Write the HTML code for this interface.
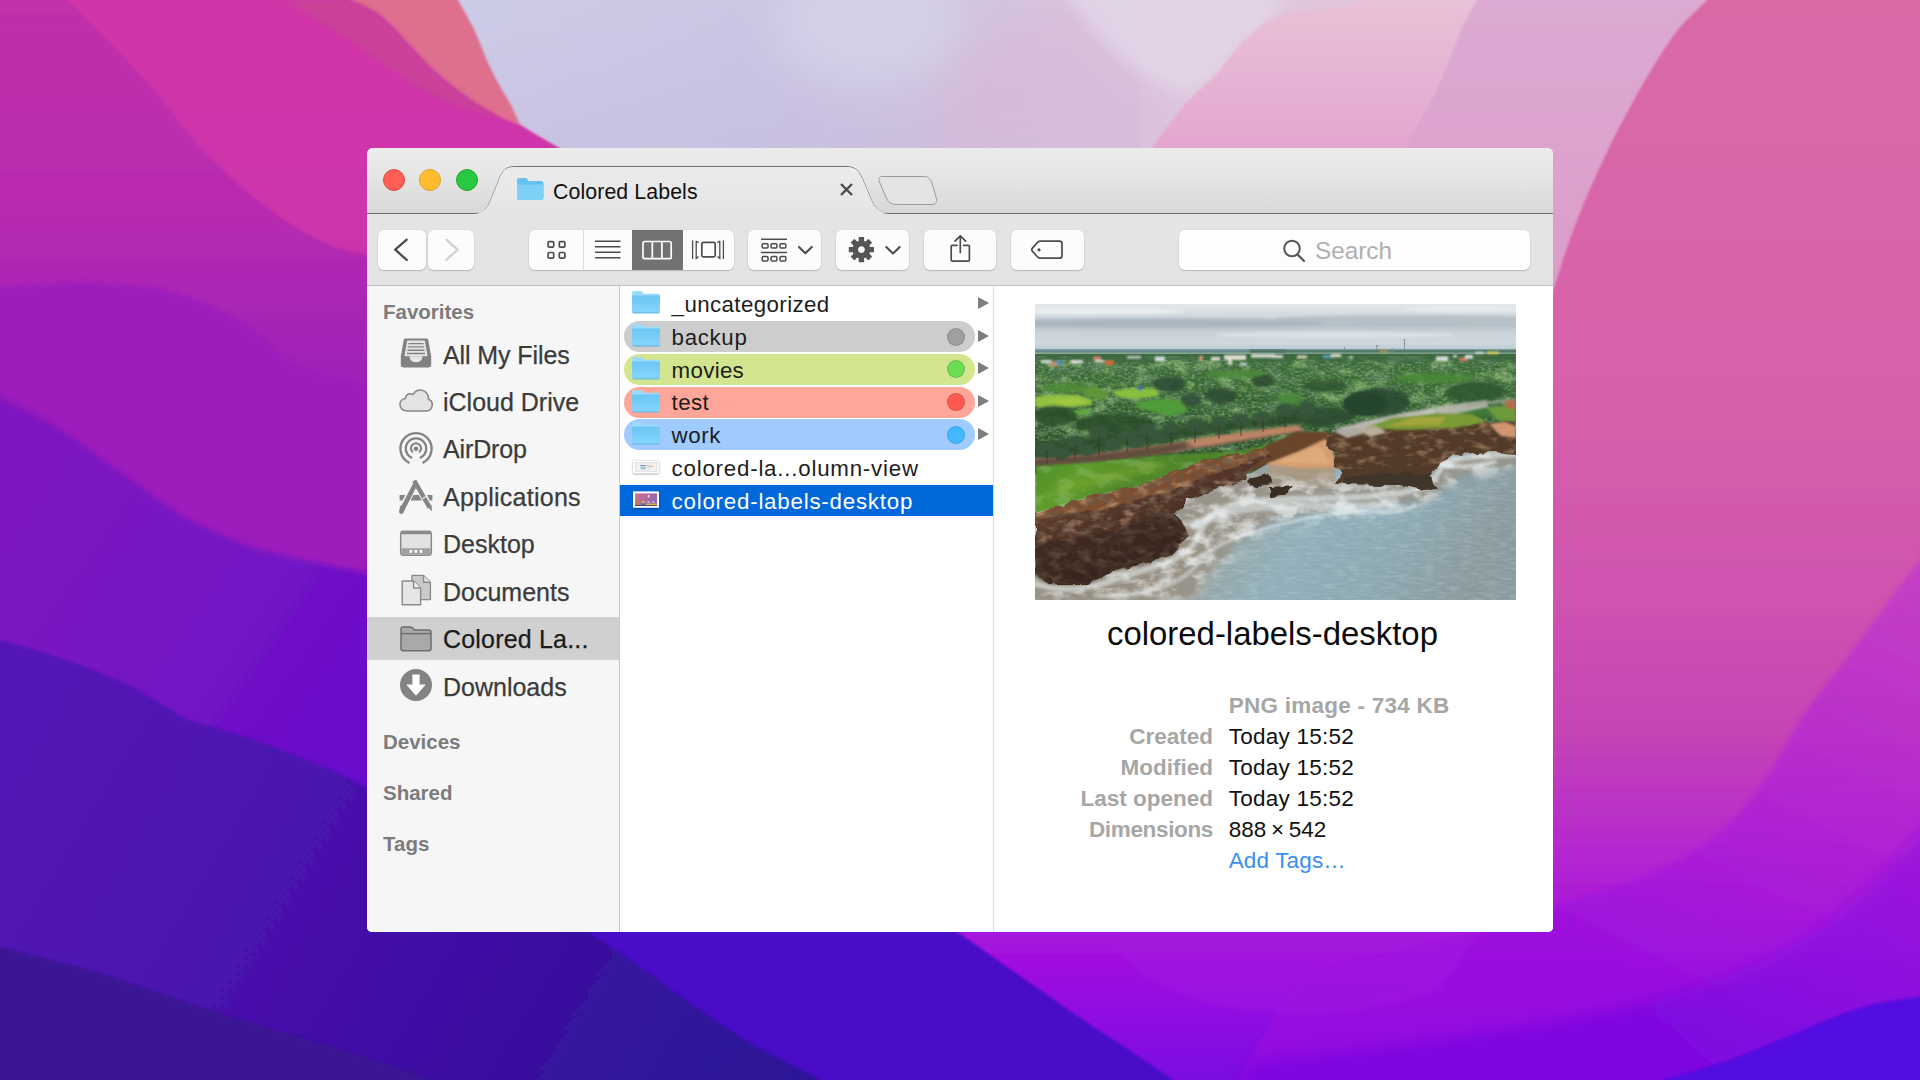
<!DOCTYPE html>
<html lang="en">
<head>
<meta charset="utf-8">
<title>Colored Labels</title>
<style>
html,body{margin:0;padding:0;width:1920px;height:1080px;overflow:hidden;background:#7a14c4;}
body{font-family:"Liberation Sans",sans-serif;position:relative;-webkit-font-smoothing:antialiased;}
#wall{position:absolute;left:0;top:0;width:1920px;height:1080px;display:block;}
#win{position:absolute;left:367px;top:148px;width:1186px;height:784px;border-radius:6px 6px 5px 5px;overflow:hidden;background:#fff;}
#win *{box-sizing:border-box;}
.abs{position:absolute;}
#titlebar{position:absolute;left:0;top:0;width:1186px;height:65px;background:linear-gradient(#ececec 0%,#e6e6e6 40%,#d8d8d8 100%);}
#tabsvg{position:absolute;left:0;top:-1px;}
#toolbar{position:absolute;left:0;top:66px;width:1186px;height:71px;background:#e4e4e4;}
#tbline{position:absolute;left:0;top:137px;width:1186px;height:1px;background:#c2c2c2;}
.tl{position:absolute;top:21px;width:22px;height:22px;border-radius:50%;}
.btn{position:absolute;top:82px;height:40px;background:#fcfcfc;border-radius:6px;box-shadow:0 1px 1.5px rgba(0,0,0,.18),0 0 0 .5px rgba(0,0,0,.04);}
.btn svg{position:absolute;left:0;top:0;}
#tabtitle{position:absolute;left:186px;top:31.6px;font-size:21.3px;line-height:24px;color:#111;white-space:nowrap;letter-spacing:.1px;}
#search{position:absolute;left:812px;top:82px;width:351px;height:40px;background:#fdfdfd;border-radius:6px;box-shadow:0 1px 1.5px rgba(0,0,0,.18),0 0 0 .5px rgba(0,0,0,.04);}
#search span{position:absolute;left:136px;top:6.5px;font-size:24.3px;line-height:28px;color:#b0b0b0;}
#sidebar{position:absolute;left:0;top:138px;width:252px;height:646px;background:#f6f6f6;}
#sbdiv{position:absolute;left:252px;top:138px;width:1px;height:646px;background:#c8c8c8;}
.sh{position:absolute;left:16px;font-size:20.5px;line-height:24px;font-weight:bold;color:#7c7c7c;white-space:nowrap;}
.si{position:absolute;left:0;width:252px;height:43px;}
.si span{position:absolute;left:76px;top:7px;-webkit-text-stroke:.25px #3b3b3b;font-size:25px;line-height:30px;color:#3b3b3b;white-space:nowrap;}
.si svg{position:absolute;left:30.7px;top:2.7px;}
.si.sel{background:#d0d0d0;}
.si.sel span{color:#1b1b1b;-webkit-text-stroke:.25px #1b1b1b;}
#col{position:absolute;left:253px;top:138px;width:373px;height:646px;background:#fff;}
#coldiv{position:absolute;left:626px;top:138px;width:1px;height:646px;background:#dcdcdc;}
.row{position:absolute;left:0;width:373px;height:31px;}
.row .nm{position:absolute;left:51.6px;top:2.9px;font-size:22.3px;line-height:27px;color:#1d1d1d;white-space:nowrap;letter-spacing:.4px;}
.row .pill{position:absolute;left:4px;top:0;width:351px;height:31px;border-radius:15.5px;}
.row .dot{position:absolute;left:327px;top:6.8px;width:18px;height:18px;border-radius:50%;border:1px solid rgba(0,0,0,.13);}
.row .tri{position:absolute;left:358px;top:8.7px;width:0;height:0;border-left:11px solid #7d7d7d;border-top:6.3px solid transparent;border-bottom:6.3px solid transparent;}
.row svg.fi{position:absolute;left:11px;top:2px;}
.row.sel{background:#0068da;}
.row.sel .nm{color:#fff;}
#prev{position:absolute;left:627px;top:138px;width:559px;height:646px;background:#fff;}
#photo{position:absolute;left:668px;top:156px;width:481px;height:296px;display:block;}
#ptitle{position:absolute;left:627px;width:559px;top:465.5px;text-align:center;font-size:32.9px;line-height:40px;color:#0b0b0b;white-space:nowrap;text-indent:-2px;}
.il{position:absolute;right:340px;font-size:22.5px;line-height:26px;color:#a6a6a6;white-space:nowrap;font-weight:bold;}
.iv{position:absolute;left:861.7px;font-size:22.5px;line-height:26px;color:#111;white-space:nowrap;}

</style>
</head>
<body>
<svg id="wall" width="1920" height="1080" viewBox="0 0 1920 1080">
<defs>
<linearGradient id="gsky" x1="440" y1="0" x2="1500" y2="0" gradientUnits="userSpaceOnUse">
<stop offset="0" stop-color="#cdcce7"/><stop offset="0.3" stop-color="#cbc6e3"/><stop offset="0.52" stop-color="#d3c4de"/><stop offset="0.66" stop-color="#dcc8de"/><stop offset="1" stop-color="#e6c4da"/>
</linearGradient>
<linearGradient id="ghill" x1="0" y1="0" x2="0" y2="150" gradientUnits="userSpaceOnUse">
<stop offset="0" stop-color="#e8c2d8"/><stop offset="1" stop-color="#e4a6cf"/>
</linearGradient>
<linearGradient id="gband" x1="0" y1="0" x2="0" y2="300" gradientUnits="userSpaceOnUse">
<stop offset="0" stop-color="#dcaad2"/><stop offset="1" stop-color="#dc9cc8"/>
</linearGradient>
<linearGradient id="ghot" x1="0" y1="0" x2="0" y2="1080" gradientUnits="userSpaceOnUse">
<stop offset="0" stop-color="#d96aa6"/><stop offset="0.35" stop-color="#d862aa"/><stop offset="0.55" stop-color="#d054b0"/><stop offset="0.68" stop-color="#c644b6"/><stop offset="0.8" stop-color="#b424d2"/><stop offset="0.88" stop-color="#a412de"/><stop offset="0.95" stop-color="#8c0ae2"/><stop offset="1" stop-color="#7c08e2"/>
</linearGradient>
<linearGradient id="gviol" x1="1920" y1="560" x2="1700" y2="1000" gradientUnits="userSpaceOnUse">
<stop offset="0" stop-color="#c238cc"/><stop offset="0.5" stop-color="#b222d6"/><stop offset="1" stop-color="#9a10de"/>
</linearGradient>
<linearGradient id="gviol2" x1="1920" y1="830" x2="1700" y2="1080" gradientUnits="userSpaceOnUse">
<stop offset="0" stop-color="#8c0ee0"/><stop offset="1" stop-color="#6c06e2"/>
</linearGradient>
<linearGradient id="gmag" x1="0" y1="0" x2="0" y2="600" gradientUnits="userSpaceOnUse">
<stop offset="0" stop-color="#d236a8"/><stop offset="0.4" stop-color="#cc34ac"/><stop offset="0.62" stop-color="#b82eb0"/><stop offset="1" stop-color="#a424b8"/>
</linearGradient>
<linearGradient id="gmag2" x1="0" y1="0" x2="0" y2="600" gradientUnits="userSpaceOnUse">
<stop offset="0" stop-color="#c030aa"/><stop offset="0.35" stop-color="#b82cb0"/><stop offset="0.6" stop-color="#a222b8"/><stop offset="1" stop-color="#961cbe"/>
</linearGradient>
<linearGradient id="gpur1" x1="-40" y1="380" x2="520" y2="760" gradientUnits="userSpaceOnUse">
<stop offset="0" stop-color="#8219be"/><stop offset="0.45" stop-color="#7514c4"/><stop offset="0.8" stop-color="#690ecb"/><stop offset="1" stop-color="#640ccd"/>
</linearGradient>
<linearGradient id="gind" x1="0" y1="620" x2="800" y2="1100" gradientUnits="userSpaceOnUse">
<stop offset="0" stop-color="#5615b8"/><stop offset="0.35" stop-color="#4c12b0"/><stop offset="0.65" stop-color="#3c11a2"/><stop offset="0.9" stop-color="#2f1398"/><stop offset="1" stop-color="#2c1396"/>
</linearGradient>
<filter id="b3" filterUnits="userSpaceOnUse" x="-60" y="-60" width="2040" height="1200"><feGaussianBlur stdDeviation="2.5"/></filter>
<filter id="b1" filterUnits="userSpaceOnUse" x="-60" y="-60" width="2040" height="1200"><feGaussianBlur stdDeviation="1"/></filter>
<filter id="b8" filterUnits="userSpaceOnUse" x="-60" y="-60" width="2040" height="1200"><feGaussianBlur stdDeviation="8"/></filter>
<linearGradient id="gskyv" x1="0" y1="0" x2="0" y2="160" gradientUnits="userSpaceOnUse"><stop offset="0" stop-color="#c0b4dc" stop-opacity="0"/><stop offset="1" stop-color="#c0b0da" stop-opacity=".3"/></linearGradient>
<filter id="b20" filterUnits="userSpaceOnUse" x="-60" y="-60" width="2040" height="1200"><feGaussianBlur stdDeviation="22"/></filter>
</defs>
<!-- sky -->
<rect width="1920" height="1080" fill="url(#gsky)"/>
<rect x="440" y="0" width="700" height="160" fill="url(#gskyv)"/>
<ellipse cx="870" cy="25" rx="95" ry="60" fill="#d8dcee" opacity=".55" filter="url(#b20)"/>
<path d="M925 160 L955 50 L1010 20 L1090 -10 L1200 160 Z" fill="#dab8d6" opacity=".5" filter="url(#b20)"/>
<!-- light patch -->
<path d="M1040 -40 C1090 30 1130 80 1190 95 C1230 60 1270 25 1310 -40 Z" fill="#e4d8ea" opacity="0.75" filter="url(#b8)"/>
<!-- pink hill -->
<path d="M1120 200 C1140 165 1160 135 1180 110 C1200 88 1212 80 1220 70 C1232 55 1240 42 1250 35 C1262 24 1275 15 1290 12 C1315 8 1340 8 1355 5 L1375 -40 L1960 -40 L1960 400 L1100 400 Z" fill="url(#ghill)" filter="url(#b1)"/>
<!-- pink band -->
<path d="M1497 -40 L1477 0 C1470 12 1465 22 1460 33 C1452 52 1448 65 1440 83 C1430 105 1420 120 1413 133 C1405 150 1395 175 1380 210 L1380 400 L1960 400 L1960 -40 Z" fill="url(#gband)" filter="url(#b1)"/>
<!-- hot pink big shape (right) -->
<path d="M1740 -40 L1707 0 C1698 9 1689 17 1680 27 C1670 40 1661 53 1653 67 C1644 82 1635 97 1627 113 C1617 131 1608 149 1600 167 C1593 182 1586 197 1580 213 C1574 228 1568 244 1563 260 C1555 285 1540 330 1520 400 L1300 900 L900 900 L900 1140 L1980 1140 L1980 -40 Z" fill="url(#ghot)" filter="url(#b1)"/>
<!-- violet overlays right/bottom -->
<path d="M1980 490 L1920 560 C1905 578 1892 595 1880 613 C1866 631 1853 649 1840 667 C1826 685 1812 702 1800 720 C1790 736 1782 752 1773 767 C1763 783 1752 799 1740 813 C1722 831 1702 847 1680 860 C1659 871 1636 880 1613 887 C1590 895 1570 901 1553 907 C1480 932 1400 955 1300 975 L1200 1140 L1980 1140 Z" fill="url(#gviol)" opacity="0.7" filter="url(#b3)"/>
<path d="M1980 760 L1920 833 C1897 860 1872 884 1847 907 C1826 924 1803 940 1780 953 C1753 966 1725 978 1697 987 C1669 996 1641 1004 1613 1010 C1500 1032 1380 1050 1250 1062 L1200 1140 L1980 1140 Z" fill="url(#gviol2)" opacity="0.55" filter="url(#b8)"/>
<path d="M1980 990 L1920 997 C1900 999 1881 1002 1863 1007 C1840 1014 1818 1023 1797 1033 C1774 1042 1752 1051 1730 1060 C1707 1067 1685 1074 1663 1080 L1500 1140 L1980 1140 Z" fill="#5208e0" filter="url(#b1)"/>
<path d="M1090 900 L1107 932 C1116 947 1127 961 1140 973 C1160 986 1183 996 1207 1003 C1231 1008 1256 1011 1280 1013 C1330 1016 1380 1010 1440 990 L1500 900 Z" fill="#a41ee0" opacity="0.4" filter="url(#b3)"/>
<!-- salmon -->
<path d="M310 -40 L440 -40 L458 0 C463 9 468 18 473 27 C479 40 484 54 490 67 C496 80 503 92 510 103 C514 111 517 118 520 125 C532 133 545 140 557 147 L640 200 L640 400 L300 400 Z" fill="#de6f8e" filter="url(#b1)"/>
<!-- main magenta band -->
<path d="M-40 -40 L300 -40 L350 0 C360 4 369 8 377 13 C388 22 398 32 407 43 C416 52 424 61 433 70 C444 80 455 89 467 97 C478 105 489 111 500 117 C507 120 514 123 520 125 C532 133 545 140 557 147 L700 230 L700 700 L-40 700 Z" fill="url(#gmag)" filter="url(#b1)"/>
<path d="M283 0 L350 0 C360 4 369 8 377 13 C388 22 398 32 407 43 C416 52 424 61 433 70 C444 80 455 89 467 97 C478 105 489 111 500 117 C470 112 440 100 410 82 C380 62 340 30 283 0 Z" fill="#c84694" opacity=".75" filter="url(#b3)"/>
<!-- darker magenta lower-left -->
<path d="M-40 -40 L30 -40 L67 0 C82 14 96 28 110 43 C127 61 144 78 160 97 C169 109 178 121 187 133 C195 142 204 151 213 160 C226 173 239 185 253 197 C268 209 284 220 300 230 C311 236 322 242 333 247 C344 250 356 253 367 255 L700 300 L700 700 L-40 700 Z" fill="url(#gmag2)" filter="url(#b1)"/>
<!-- more purple blob -->
<path d="M-40 290 L0 287 C35 284 68 282 100 283 C123 284 146 286 167 290 C190 297 212 306 233 317 C252 329 270 344 287 360 C300 367 316 372 333 377 L367 383 L700 420 L700 700 L-40 700 Z" fill="#9c1ebc" filter="url(#b3)"/>
<!-- purple -->
<path d="M-40 378 L0 397 C17 405 34 414 50 423 C73 438 95 454 117 470 C139 486 161 502 183 517 C205 528 227 538 250 547 C272 553 294 559 317 563 C334 567 350 570 367 573 L700 620 L700 1140 L-40 1140 Z" fill="url(#gpur1)" filter="url(#b3)"/>
<path d="M560 900 L912 900 L957 932 C974 943 990 955 1007 967 C1029 982 1051 998 1073 1013 C1095 1028 1118 1043 1140 1057 L1173 1080 L1260 1140 L560 1140 Z" fill="#4a0cc8" filter="url(#b1)"/>
<!-- indigo -->
<path d="M-40 630 L0 640 C23 646 45 653 67 660 C89 668 111 677 133 687 C151 698 169 709 187 720 C202 724 218 728 233 733 C256 740 278 748 300 757 C323 766 345 776 367 787 L590 900 L590 933 C607 944 624 955 640 967 C657 979 674 991 690 1003 C707 1015 724 1026 740 1037 C762 1050 785 1062 807 1073 L820 1080 L930 1140 L-40 1140 Z" fill="url(#gind)" filter="url(#b1)"/>
<!-- dark indigo bottom -->
<path d="M-40 938 L0 947 C34 955 67 964 100 973 C134 984 167 995 200 1007 C234 1017 267 1027 300 1037 C328 1045 356 1054 383 1063 L433 1080 L600 1140 L-40 1140 Z" fill="#3a1294" filter="url(#b1)"/>
</svg>

<div id="win">
<div id="titlebar"></div>
<svg id="tabsvg" width="1186" height="67" viewBox="0 0 1186 67">
<defs><linearGradient id="tabg" x1="0" y1="19" x2="0" y2="66" gradientUnits="userSpaceOnUse"><stop offset="0" stop-color="#ebebeb"/><stop offset="1" stop-color="#e5e5e5"/></linearGradient></defs>
<path d="M0 66 L106 66 C118 66 121 60 125 50 L133 30 C137 21 141 19.5 150 19.5 L478 19.5 C487 19.5 491 22 495 31 L503 50 C507 60 511 66 523 66 L1186 66 L1186 67 L0 67 Z" fill="url(#tabg)"/>
<path d="M0 66.5 L106 66.5 C118 66.5 121 60 125 50 L133 30 C137 21 141 19.5 150 19.5 L478 19.5 C487 19.5 491 22 495 31 L503 50 C507 60 511 66.5 523 66.5 L1186 66.5" fill="none" stroke="#6e6e6e" stroke-width="1"/>
<path d="M150 20 L478 20 C487 20 491 22 495 31 L503 50 C507 60 511 66 523 66 L106 66 C118 66 121 60 125 50 L133 30 C137 21 141 20 150 20 Z" fill="url(#tabg)"/>
<path d="M516 29.5 L556 29.5 C561 29.5 563 31 565 36 L569 50 C570.5 55 569 57.5 564 57.5 L530 57.5 C524 57.5 521 55.5 519 50 L512.5 35 C511 31 512 29.5 516 29.5 Z" fill="#e4e4e4" stroke="#9a9a9a" stroke-width="1"/>
<path d="M474 37 L485 48 M485 37 L474 48" stroke="#4a4a4a" stroke-width="2.4" fill="none"/>
<g transform="translate(149,30)">
<path d="M1 3.5 C1 2 2 1 3.5 1 L9.5 1 C10.5 1 11 1.5 11.5 2.5 L12.5 4 L25 4 C26.5 4 27.5 5 27.5 6.5 L27.5 20.5 C27.5 22 26.5 23 25 23 L3.5 23 C2 23 1 22 1 20.5 Z" fill="#67c1f0"/>
<path d="M1 7.5 L27.5 7.5 L27.5 20.5 C27.5 22 26.5 23 25 23 L3.5 23 C2 23 1 22 1 20.5 Z" fill="#7fd0f7"/>
</g>
</svg>
<div class="tl" style="left:16px;background:#fe5f57;border:.5px solid #e2463f"></div>
<div class="tl" style="left:52px;background:#febc2e;border:.5px solid #e0a028"></div>
<div class="tl" style="left:89px;background:#28c840;border:.5px solid #1dab2f"></div>
<div id="tabtitle">Colored Labels</div>
<div id="toolbar"></div>
<div id="tbline"></div>
<div class="btn" style="left:10.5px;width:48px"><svg width="48" height="40"><path d="M28.7 9.7 L17.2 19.7 L28.7 29.9" fill="none" stroke="#4c4c4c" stroke-width="2.3" stroke-linecap="round" stroke-linejoin="round"/></svg></div>
<div class="btn" style="left:60.7px;width:46px"><svg width="46" height="40"><path d="M18.3 9.7 L29.6 19.7 L18.3 29.9" fill="none" stroke="#d2d2d2" stroke-width="2.3" stroke-linecap="round" stroke-linejoin="round"/></svg></div>
<div class="btn" style="left:162px;width:205px;overflow:hidden"><svg width="205" height="40">
<rect x="103" y="0" width="51" height="40" fill="#727272"/>
<rect x="54" y="0" width="1" height="40" fill="#dedede"/>
<g fill="none" stroke="#4c4c4c" stroke-width="1.7">
<rect x="19.1" y="11.6" width="5.6" height="5.6" rx="1.2"/><rect x="30.3" y="11.6" width="5.6" height="5.6" rx="1.2"/><rect x="19.1" y="22.5" width="5.6" height="5.6" rx="1.2"/><rect x="30.3" y="22.5" width="5.6" height="5.6" rx="1.2"/>
<path d="M66 11.3 H91.5 M66 16.7 H91.5 M66 22.3 H91.5 M66 27.8 H91.5" stroke-width="1.5"/>
</g>
<g fill="none" stroke="#fff" stroke-width="1.7"><rect x="114" y="11.5" width="28.2" height="17.2" rx="1.8"/><path d="M123.3 11.5 V28.7 M132.9 11.5 V28.7"/></g>
<g fill="none" stroke="#4c4c4c" stroke-width="1.7"><rect x="172.8" y="12.3" width="13.4" height="14.6" rx="1.6"/><path d="M163.6 10.5 V28.9 M194.4 10.5 V28.9" stroke-width="1.3"/><path d="M167.2 11 V28.4 L169.6 26.6 M167.2 11 L169.6 12.8 M190.8 11 V28.4 L188.4 26.6 M190.8 11 L188.4 12.8" stroke-width="1.3"/></g>
</svg></div>
<div class="btn" style="left:381px;width:73px"><svg width="73" height="40"><g fill="none" stroke="#4c4c4c" stroke-width="1.5"><path d="M13 9.2 H39 M13 22.6 H39"/><rect x="14.2" y="13.7" width="5.8" height="4.4" rx="1"/><rect x="23.1" y="13.7" width="5.8" height="4.4" rx="1"/><rect x="32" y="13.7" width="5.8" height="4.4" rx="1"/><rect x="14.2" y="26.6" width="5.8" height="4.4" rx="1"/><rect x="23.1" y="26.6" width="5.8" height="4.4" rx="1"/><rect x="32" y="26.6" width="5.8" height="4.4" rx="1"/></g><path d="M51 16.9 L57.4 23.3 L63.8 16.9" fill="none" stroke="#4c4c4c" stroke-width="2.1" stroke-linecap="round" stroke-linejoin="round"/></svg></div>
<div class="btn" style="left:469px;width:72.5px"><svg width="73" height="40"><g transform="translate(25.4,19.6)" fill="#555"><rect x="-2.7" y="-12.6" width="5.4" height="6" rx="0.6" transform="rotate(0)"/><rect x="-2.7" y="-12.6" width="5.4" height="6" rx="0.6" transform="rotate(45)"/><rect x="-2.7" y="-12.6" width="5.4" height="6" rx="0.6" transform="rotate(90)"/><rect x="-2.7" y="-12.6" width="5.4" height="6" rx="0.6" transform="rotate(135)"/><rect x="-2.7" y="-12.6" width="5.4" height="6" rx="0.6" transform="rotate(180)"/><rect x="-2.7" y="-12.6" width="5.4" height="6" rx="0.6" transform="rotate(225)"/><rect x="-2.7" y="-12.6" width="5.4" height="6" rx="0.6" transform="rotate(270)"/><rect x="-2.7" y="-12.6" width="5.4" height="6" rx="0.6" transform="rotate(315)"/><circle r="6.2" fill="none" stroke="#555" stroke-width="5.6"/></g><path d="M50.3 17 L57 23.4 L63.7 17" fill="none" stroke="#4c4c4c" stroke-width="2.1" stroke-linecap="round" stroke-linejoin="round"/></svg></div>
<div class="btn" style="left:556.8px;width:72.5px"><svg width="73" height="40"><g fill="none" stroke="#4c4c4c" stroke-width="1.7" stroke-linejoin="round" stroke-linecap="round"><path d="M33 15.3 H28.4 C27.6 15.3 27.2 15.7 27.2 16.5 V30 C27.2 30.8 27.6 31.2 28.4 31.2 H44.2 C45 31.2 45.4 30.8 45.4 30 V16.5 C45.4 15.7 45 15.3 44.2 15.3 H39.6"/><path d="M36.3 6 V22.5 M31 11.2 L36.3 5.8 L41.6 11.2"/></g></svg></div>
<div class="btn" style="left:644.3px;width:72.5px"><svg width="73" height="40"><path d="M29.3 11.2 H48.5 C50 11.2 51 12.2 51 13.7 V25.7 C51 27.2 50 28.2 48.5 28.2 H29.3 C28.3 28.2 27.6 27.9 26.8 27.2 L21.6 21.5 C20.6 20.4 20.6 19 21.6 17.9 L26.8 12.2 C27.6 11.5 28.3 11.2 29.3 11.2 Z" fill="none" stroke="#4c4c4c" stroke-width="1.7"/><circle cx="28" cy="19.8" r="1.6" fill="#4c4c4c"/></svg></div>

<div id="search"><svg width="351" height="40" style="position:absolute;left:0;top:0"><circle cx="113" cy="18.5" r="7.8" fill="none" stroke="#555" stroke-width="2"/><path d="M118.5 24.5 L125 31" stroke="#555" stroke-width="2.2" stroke-linecap="round"/></svg><span>Search</span></div>
<div id="sidebar">
<div class="sh" style="top:13.7px">Favorites</div>
<div class="si" style="top:46.5px"><svg width="36" height="36" viewBox="0 0 36 36"><path d="M7.6 3.4 H28.4 C29.5 3.4 30.1 4 30.3 5 L33.2 21.3 V29.8 C33.2 31.4 32.2 32.4 30.6 32.4 H5.4 C3.8 32.4 2.8 31.4 2.8 29.8 V21.3 L5.7 5 C5.9 4 6.5 3.4 7.6 3.4 Z" fill="#818181"/><path d="M9.2 5.6 H26.8 L29.6 21.6 H6.4 Z" fill="#e6e6e6"/><path d="M10.4 8.6 H25.6 M9.9 11.9 H26.1 M9.4 15.2 H26.6 M8.9 18.5 H27.1" stroke="#818181" stroke-width="1.4" fill="none"/><path d="M5 21.4 H31 V23 H5 Z" fill="#818181"/><path d="M11.6 21.2 C11.6 25 14 27.2 18 27.2 C22 27.2 24.4 25 24.4 21.2 Z" fill="#e6e6e6"/></svg><span style="letter-spacing:-0.09px">All My Files</span></div>
<div class="si" style="top:94.0px"><svg width="36" height="36" viewBox="0 0 36 36"><path transform="translate(0,-0.8)" d="M9.3 28.8 C5 28.8 1.9 26 1.9 22.4 C1.9 19.2 4.3 16.7 7.4 16.3 C7.6 13.5 9.8 11.6 12.5 11.6 C13.5 11.6 14.4 11.9 15.2 12.3 C16.6 9.5 19.3 7.9 22.4 7.9 C27 7.9 30.5 11.5 30.5 15.9 C30.5 16.3 30.5 16.7 30.4 17.1 C32.7 17.9 34.3 20.1 34.3 22.6 C34.3 26 31.7 28.8 28.2 28.8 Z" fill="#e3e3e3" stroke="#858585" stroke-width="1.5" stroke-linejoin="round"/></svg><span>iCloud Drive</span></div>
<div class="si" style="top:141.4px"><svg width="36" height="36" viewBox="0 0 36 36"><g fill="none" stroke="#828282" stroke-linecap="round"><path d="M10.7 32.5 A15.6 15.6 0 1 1 25.3 32.5" stroke-width="2.3"/><path d="M13.2 27.6 A10.2 10.2 0 1 1 22.8 27.6" stroke-width="2.3"/><path d="M14.2 21.6 A5 5 0 1 1 21.8 21.6" stroke-width="2.2"/></g><circle cx="18" cy="18.7" r="2.3" fill="#828282"/></svg><span style="letter-spacing:-0.13px">AirDrop</span></div>
<div class="si" style="top:188.9px"><svg width="36" height="36" viewBox="0 0 36 36"><path d="M1.6 17 H34.4 V22.6 H1.6 Z" fill="#858585"/><path d="M17.2 5.6 L3.8 31.6" stroke="#f6f6f6" stroke-width="7.2" fill="none"/><path d="M17.6 3 L32.6 31.6" stroke="#f6f6f6" stroke-width="7.2" fill="none"/><path d="M17.4 6 L5.8 28.4 L3.4 33.6 L4.6 28" stroke="#858585" stroke-width="4.6" fill="none" stroke-linejoin="round"/><path d="M3 34 L3.9 29.4 L7 31 Z" fill="#858585"/><path d="M16.2 2.6 L31.6 29.4" stroke="#858585" stroke-width="4.4" fill="none"/><path d="M29.6 28.8 L33.4 26.8 L34.2 33.6 Z" fill="#858585"/><path d="M24.6 20.4 L29.2 18" stroke="#f6f6f6" stroke-width="1.1"/></svg><span style="letter-spacing:0.25px">Applications</span></div>
<div class="si" style="top:236.3px"><svg width="36" height="36" viewBox="0 0 36 36"><rect x="2.7" y="6.2" width="30.6" height="24" rx="2.6" fill="#e2e2e2" stroke="#8a8a8a" stroke-width="1.5"/><path d="M3.4 7.6 C3.4 6.6 4.2 6.2 5.2 6.2 H30.8 C31.8 6.2 32.6 6.6 32.6 7.6 V9.2 H3.4 Z" fill="#8a8a8a"/><path d="M3.4 23.2 H32.6 V28 C32.6 29.2 31.8 29.6 30.8 29.6 H5.2 C4.2 29.6 3.4 29.2 3.4 28 Z" fill="#a0a0a0"/><rect x="11.6" y="25" width="2.6" height="2.8" fill="#fff"/><rect x="16.6" y="25" width="2.6" height="2.8" fill="#fff"/><rect x="21.6" y="25" width="2.6" height="2.8" fill="#fff"/></svg><span>Desktop</span></div>
<div class="si" style="top:283.8px"><svg width="36" height="36" viewBox="0 0 36 36"><path d="M14 3.4 H25.6 L32.4 10.2 V27.6 H14 Z" fill="#c9c9c9" stroke="#8a8a8a" stroke-width="1.4" stroke-linejoin="round"/><path d="M25.6 3.4 V10.2 H32.4" fill="#e6e6e6" stroke="#8a8a8a" stroke-width="1.4" stroke-linejoin="round"/><path d="M4.2 9 H15.6 L22.6 16 V32.8 H4.2 Z" fill="#e6e6e6" stroke="#8a8a8a" stroke-width="1.4" stroke-linejoin="round"/><path d="M15.6 9 V16 H22.6" fill="#f4f4f4" stroke="#8a8a8a" stroke-width="1.4" stroke-linejoin="round"/></svg><span>Documents</span></div>
<div class="si sel" style="top:331.2px"><svg width="36" height="36" viewBox="0 0 36 36"><path d="M3 9.2 C3 7.8 3.8 7 5.2 7 H12.8 C13.8 7 14.4 7.4 15 8.2 L16.4 10 H30.8 C32.2 10 33 10.8 33 12.2 V28.6 C33 30 32.2 30.8 30.8 30.8 H5.2 C3.8 30.8 3 30 3 28.6 Z" fill="#a9a9a9" stroke="#6c6c6c" stroke-width="1.5" stroke-linejoin="round"/><path d="M3 13.6 H33" stroke="#6c6c6c" stroke-width="1.4"/></svg><span style="letter-spacing:0.19px">Colored La...</span></div>
<div class="si" style="top:378.7px"><svg width="36" height="36" viewBox="0 0 36 36"><circle cx="18" cy="18" r="16" fill="#838383"/><path d="M14.4 7.6 H21.6 V17.4 H27.8 L18 28.8 L8.2 17.4 H14.4 Z" fill="#fff"/></svg><span>Downloads</span></div>
<div class="sh" style="top:444px">Devices</div>
<div class="sh" style="top:495px">Shared</div>
<div class="sh" style="top:546px">Tags</div>
</div>
<div id="sbdiv"></div>
<div id="col">
<svg width="0" height="0" style="position:absolute"><defs><filter id="ts" x="-20%" y="-30%" width="140%" height="170%"><feGaussianBlur stdDeviation="0.9"/></filter></defs></svg>
<div class="row" style="top:2.00px"><svg class="fi" width="30" height="24" viewBox="0 0 30 24"><defs><linearGradient id="fg0" x1="0" y1="5" x2="0" y2="23" gradientUnits="userSpaceOnUse"><stop offset="0" stop-color="#6bc5f4"/><stop offset="1" stop-color="#86d6fc"/></linearGradient></defs><path d="M1 3 C1 1.7 1.8 1 3 1 L9.4 1 C10.2 1 10.7 1.3 11.3 1.9 L12.6 3.2 C13 3.6 13.4 3.8 14 3.8 L27 3.8 C28.2 3.8 29 4.6 29 5.8 L29 21 C29 22.2 28.2 23 27 23 L3 23 C1.8 23 1 22.2 1 21 Z" fill="#9bdcfc"/><path d="M1 6.6 C1 5.8 1.5 5.4 2.2 5.4 L27.8 5.4 C28.5 5.4 29 5.8 29 6.6 L29 21 C29 22.2 28.2 23 27 23 L3 23 C1.8 23 1 22.2 1 21 Z" fill="url(#fg0)"/><path d="M1.4 22.2 C1.8 22.8 2.4 23 3 23 L27 23 C27.6 23 28.2 22.8 28.6 22.2" fill="none" stroke="#58acdd" stroke-width="0.9"/></svg><span class="nm" id="nm0">_uncategorized</span><div class="tri"></div></div>
<div class="row" style="top:34.85px"><div class="pill" style="background:#cdcdcd"></div><svg class="fi" width="30" height="24" viewBox="0 0 30 24"><defs><linearGradient id="fg1" x1="0" y1="5" x2="0" y2="23" gradientUnits="userSpaceOnUse"><stop offset="0" stop-color="#6bc5f4"/><stop offset="1" stop-color="#86d6fc"/></linearGradient></defs><path d="M1 3 C1 1.7 1.8 1 3 1 L9.4 1 C10.2 1 10.7 1.3 11.3 1.9 L12.6 3.2 C13 3.6 13.4 3.8 14 3.8 L27 3.8 C28.2 3.8 29 4.6 29 5.8 L29 21 C29 22.2 28.2 23 27 23 L3 23 C1.8 23 1 22.2 1 21 Z" fill="#9bdcfc"/><path d="M1 6.6 C1 5.8 1.5 5.4 2.2 5.4 L27.8 5.4 C28.5 5.4 29 5.8 29 6.6 L29 21 C29 22.2 28.2 23 27 23 L3 23 C1.8 23 1 22.2 1 21 Z" fill="url(#fg1)"/><path d="M1.4 22.2 C1.8 22.8 2.4 23 3 23 L27 23 C27.6 23 28.2 22.8 28.6 22.2" fill="none" stroke="#58acdd" stroke-width="0.9"/></svg><span class="nm" id="nm1" style="letter-spacing:0.67px">backup</span><div class="dot" style="background:#9f9f9f"></div><div class="tri"></div></div>
<div class="row" style="top:67.70px"><div class="pill" style="background:#d3e58e"></div><svg class="fi" width="30" height="24" viewBox="0 0 30 24"><defs><linearGradient id="fg2" x1="0" y1="5" x2="0" y2="23" gradientUnits="userSpaceOnUse"><stop offset="0" stop-color="#6bc5f4"/><stop offset="1" stop-color="#86d6fc"/></linearGradient></defs><path d="M1 3 C1 1.7 1.8 1 3 1 L9.4 1 C10.2 1 10.7 1.3 11.3 1.9 L12.6 3.2 C13 3.6 13.4 3.8 14 3.8 L27 3.8 C28.2 3.8 29 4.6 29 5.8 L29 21 C29 22.2 28.2 23 27 23 L3 23 C1.8 23 1 22.2 1 21 Z" fill="#9bdcfc"/><path d="M1 6.6 C1 5.8 1.5 5.4 2.2 5.4 L27.8 5.4 C28.5 5.4 29 5.8 29 6.6 L29 21 C29 22.2 28.2 23 27 23 L3 23 C1.8 23 1 22.2 1 21 Z" fill="url(#fg2)"/><path d="M1.4 22.2 C1.8 22.8 2.4 23 3 23 L27 23 C27.6 23 28.2 22.8 28.6 22.2" fill="none" stroke="#58acdd" stroke-width="0.9"/></svg><span class="nm" id="nm2" style="letter-spacing:0.31px">movies</span><div class="dot" style="background:#6edc53"></div><div class="tri"></div></div>
<div class="row" style="top:100.55px"><div class="pill" style="background:#ffa69a"></div><svg class="fi" width="30" height="24" viewBox="0 0 30 24"><defs><linearGradient id="fg3" x1="0" y1="5" x2="0" y2="23" gradientUnits="userSpaceOnUse"><stop offset="0" stop-color="#6bc5f4"/><stop offset="1" stop-color="#86d6fc"/></linearGradient></defs><path d="M1 3 C1 1.7 1.8 1 3 1 L9.4 1 C10.2 1 10.7 1.3 11.3 1.9 L12.6 3.2 C13 3.6 13.4 3.8 14 3.8 L27 3.8 C28.2 3.8 29 4.6 29 5.8 L29 21 C29 22.2 28.2 23 27 23 L3 23 C1.8 23 1 22.2 1 21 Z" fill="#9bdcfc"/><path d="M1 6.6 C1 5.8 1.5 5.4 2.2 5.4 L27.8 5.4 C28.5 5.4 29 5.8 29 6.6 L29 21 C29 22.2 28.2 23 27 23 L3 23 C1.8 23 1 22.2 1 21 Z" fill="url(#fg3)"/><path d="M1.4 22.2 C1.8 22.8 2.4 23 3 23 L27 23 C27.6 23 28.2 22.8 28.6 22.2" fill="none" stroke="#58acdd" stroke-width="0.9"/></svg><span class="nm" id="nm3">test</span><div class="dot" style="background:#ff5a50"></div><div class="tri"></div></div>
<div class="row" style="top:133.40px"><div class="pill" style="background:#9fcbff"></div><svg class="fi" width="30" height="24" viewBox="0 0 30 24"><defs><linearGradient id="fg4" x1="0" y1="5" x2="0" y2="23" gradientUnits="userSpaceOnUse"><stop offset="0" stop-color="#6bc5f4"/><stop offset="1" stop-color="#86d6fc"/></linearGradient></defs><path d="M1 3 C1 1.7 1.8 1 3 1 L9.4 1 C10.2 1 10.7 1.3 11.3 1.9 L12.6 3.2 C13 3.6 13.4 3.8 14 3.8 L27 3.8 C28.2 3.8 29 4.6 29 5.8 L29 21 C29 22.2 28.2 23 27 23 L3 23 C1.8 23 1 22.2 1 21 Z" fill="#9bdcfc"/><path d="M1 6.6 C1 5.8 1.5 5.4 2.2 5.4 L27.8 5.4 C28.5 5.4 29 5.8 29 6.6 L29 21 C29 22.2 28.2 23 27 23 L3 23 C1.8 23 1 22.2 1 21 Z" fill="url(#fg4)"/><path d="M1.4 22.2 C1.8 22.8 2.4 23 3 23 L27 23 C27.6 23 28.2 22.8 28.6 22.2" fill="none" stroke="#58acdd" stroke-width="0.9"/></svg><span class="nm" id="nm4" style="letter-spacing:0.55px">work</span><div class="dot" style="background:#43b7ff"></div><div class="tri"></div></div>
<div class="row" style="top:166.25px"><svg class="fi" width="30" height="24" viewBox="0 -2 30 24" style="overflow:visible"><rect x="2" y="5.4" width="26" height="13" fill="#000" opacity=".28" filter="url(#ts)"/><rect x="2" y="4.4" width="26" height="12.8" fill="#fff" stroke="#d8d8d8" stroke-width=".4"/><rect x="4.2" y="6.4" width="21.8" height="9" fill="#f1f1f1" stroke="#cfcfcf" stroke-width=".5"/><rect x="9.2" y="9" width="6" height="1.1" fill="#7a8fd0"/><rect x="9.2" y="10.8" width="5.6" height="1" fill="#8cc0a0"/><rect x="9.6" y="12.4" width="5" height="1" fill="#7fb0e0"/><rect x="16.4" y="9.8" width="5.4" height=".9" fill="#e0a080"/><rect x="16.6" y="7.6" width=".6" height="7.6" fill="#d0d0d0"/></svg><span class="nm" id="nm5" style="letter-spacing:0.78px">colored-la...olumn-view</span></div>
<div class="row sel" style="top:199.10px"><svg class="fi" width="30" height="24" viewBox="0 0 30 24" style="overflow:visible"><defs><linearGradient id="t2g" x1="0" y1="0" x2="1" y2="0.4"><stop offset="0" stop-color="#d0718f"/><stop offset="0.55" stop-color="#b56aa0"/><stop offset="1" stop-color="#8f67b4"/></linearGradient></defs><rect x="2" y="5.6" width="26" height="16.4" fill="#001a50" opacity=".45" filter="url(#ts)"/><rect x="2" y="4.4" width="26" height="16.4" fill="#fff"/><rect x="4.1" y="6.4" width="21.9" height="12.4" fill="url(#t2g)"/><path d="M4.1 13 L10 12 L14 14 L14 18.8 L4.1 18.8 Z" fill="#b8786c" opacity=".8"/><rect x="10" y="16.4" width="4.4" height="1.6" fill="#2f7fe0"/><rect x="15" y="16.6" width="10.6" height="1.5" fill="#d9b93c"/><rect x="4.1" y="18" width="21.9" height=".8" fill="#4a3848"/><rect x="11" y="14.4" width="2.6" height="1.3" fill="#ddd" opacity=".8"/><rect x="16.4" y="14.4" width="2.6" height="1.3" fill="#ddd" opacity=".8"/><rect x="21" y="14.4" width="2.6" height="1.3" fill="#ddd" opacity=".8"/><rect x="16.8" y="8" width="1.6" height="2.6" fill="#e8e0ea"/><rect x="16.6" y="11" width="2" height="1" fill="#e0604a"/></svg><span class="nm" id="nm6" style="letter-spacing:0.78px">colored-labels-desktop</span></div>
</div>
<div id="coldiv"></div>
<div id="prev"></div>
<svg id="photo" width="481" height="296" viewBox="0 0 481 296">
<defs>
<linearGradient id="psky" x1="0" y1="0" x2="0" y2="46" gradientUnits="userSpaceOnUse"><stop offset="0" stop-color="#e3e7e9"/><stop offset="0.25" stop-color="#d3dadf"/><stop offset="0.45" stop-color="#b4bfc7"/><stop offset="0.62" stop-color="#c9d2d8"/><stop offset="0.85" stop-color="#cfd9de"/><stop offset="1" stop-color="#b9c9d1"/></linearGradient>
<linearGradient id="pfor" x1="0" y1="50" x2="0" y2="150" gradientUnits="userSpaceOnUse"><stop offset="0" stop-color="#3c6a3e"/><stop offset="0.25" stop-color="#386b31"/><stop offset="0.6" stop-color="#305c2d"/><stop offset="1" stop-color="#2b4b29"/></linearGradient>
<linearGradient id="psea" x1="200" y1="170" x2="420" y2="296" gradientUnits="userSpaceOnUse"><stop offset="0" stop-color="#98a39f"/><stop offset="0.35" stop-color="#90afba"/><stop offset="0.7" stop-color="#8ca8b1"/><stop offset="1" stop-color="#8b9a9e"/></linearGradient>
<linearGradient id="plawn" x1="0" y1="150" x2="60" y2="215" gradientUnits="userSpaceOnUse"><stop offset="0" stop-color="#4a8a27"/><stop offset="0.5" stop-color="#5f9c2d"/><stop offset="1" stop-color="#4f8629"/></linearGradient>
<linearGradient id="pcliff" x1="0" y1="180" x2="40" y2="290" gradientUnits="userSpaceOnUse"><stop offset="0" stop-color="#6e4630"/><stop offset="0.45" stop-color="#54352a"/><stop offset="1" stop-color="#3a281e"/></linearGradient>
<filter id="pb1"><feGaussianBlur stdDeviation="0.9"/></filter>
<filter id="pb2"><feGaussianBlur stdDeviation="1.6"/></filter>
<filter id="pb4"><feGaussianBlur stdDeviation="3.5"/></filter>
<filter id="nzdark" x="0" y="0" width="100%" height="100%"><feTurbulence type="fractalNoise" baseFrequency="0.06 0.1" numOctaves="3" seed="7"/><feColorMatrix type="matrix" values="0 0 0 0 0.09  0 0 0 0 0.2  0 0 0 0 0.1  0 0 0 3.2 -1.45"/><feComposite in2="SourceGraphic" operator="in"/></filter>
<filter id="nzlight" x="0" y="0" width="100%" height="100%"><feTurbulence type="fractalNoise" baseFrequency="0.05 0.09" numOctaves="3" seed="21"/><feColorMatrix type="matrix" values="0 0 0 0 0.33  0 0 0 0 0.57  0 0 0 0 0.2  0 4.5 0 0 -2.2"/><feComposite in2="SourceGraphic" operator="in"/></filter>
<filter id="nzrock" x="0" y="0" width="100%" height="100%"><feTurbulence type="fractalNoise" baseFrequency="0.07 0.13" numOctaves="3" seed="11"/><feColorMatrix type="matrix" values="0 0 0 0 0.72  0 0 0 0 0.47  0 0 0 0 0.28  0 0 3.4 0 -1.7"/><feComposite in2="SourceGraphic" operator="in"/></filter>
<filter id="nzrockd" x="0" y="0" width="100%" height="100%"><feTurbulence type="fractalNoise" baseFrequency="0.08 0.12" numOctaves="3" seed="5"/><feColorMatrix type="matrix" values="0 0 0 0 0.14  0 0 0 0 0.1  0 0 0 0 0.07  3.4 0 0 0 -1.5"/><feComposite in2="SourceGraphic" operator="in"/></filter>
<filter id="nzfoam" x="-10%" y="-10%" width="120%" height="120%"><feGaussianBlur in="SourceAlpha" stdDeviation="7" result="m"/><feTurbulence type="fractalNoise" baseFrequency="0.05 0.08" numOctaves="4" seed="4"/><feColorMatrix type="matrix" values="0 0 0 0 0.9  0 0 0 0 0.94  0 0 0 0 0.95  0 0 4 0 -1.75"/><feComposite in2="m" operator="in"/></filter>
<filter id="rough" x="-5%" y="-5%" width="110%" height="110%"><feTurbulence type="fractalNoise" baseFrequency="0.09" numOctaves="2" seed="9" result="t"/><feDisplacementMap in="SourceGraphic" in2="t" scale="7" xChannelSelector="R" yChannelSelector="G"/></filter>
<filter id="nzfine" x="0" y="0" width="100%" height="100%"><feTurbulence type="fractalNoise" baseFrequency="0.28 0.4" numOctaves="2" seed="13"/><feColorMatrix type="matrix" values="0 0 0 0 0.07  0 0 0 0 0.16  0 0 0 0 0.08  2.6 0 0 0 -1.0"/><feComposite in2="SourceGraphic" operator="in"/></filter>
<filter id="nzfinel" x="0" y="0" width="100%" height="100%"><feTurbulence type="fractalNoise" baseFrequency="0.3 0.45" numOctaves="2" seed="31"/><feColorMatrix type="matrix" values="0 0 0 0 0.45  0 0 0 0 0.66  0 0 0 0 0.3  0 2.8 0 0 -1.3"/><feComposite in2="SourceGraphic" operator="in"/></filter>
<filter id="nzsea" x="0" y="0" width="100%" height="100%"><feTurbulence type="fractalNoise" baseFrequency="0.08 0.35" numOctaves="2" seed="17"/><feColorMatrix type="matrix" values="0 0 0 0 0.82  0 0 0 0 0.9  0 0 0 0 0.93  0 0 2.2 0 -0.95"/><feComposite in2="SourceGraphic" operator="in"/></filter>
<filter id="nzseaD" x="0" y="0" width="100%" height="100%"><feTurbulence type="fractalNoise" baseFrequency="0.08 0.35" numOctaves="2" seed="29"/><feColorMatrix type="matrix" values="0 0 0 0 0.36  0 0 0 0 0.46  0 0 0 0 0.5  0 0 2.2 0 -0.95"/><feComposite in2="SourceGraphic" operator="in"/></filter>
<clipPath id="pclip"><rect width="481" height="296"/></clipPath>
</defs>
<g clip-path="url(#pclip)">
<rect width="481" height="296" fill="url(#psky)"/>
<g filter="url(#pb2)"><ellipse cx="120" cy="19" rx="170" ry="4.5" fill="#a5b1ba" opacity=".7"/><ellipse cx="380" cy="15" rx="140" ry="4" fill="#aab5bd" opacity=".6"/><ellipse cx="60" cy="7" rx="90" ry="3.5" fill="#eef1f2" opacity=".8"/><ellipse cx="300" cy="31" rx="120" ry="3" fill="#e2e8eb" opacity=".7"/><ellipse cx="430" cy="5" rx="60" ry="3" fill="#edf0f1" opacity=".7"/></g>
<!-- far sea / shore -->
<rect x="0" y="45.2" width="250" height="3.6" fill="#6f909b"/>
<rect x="0" y="48.6" width="215" height="2.6" fill="#dfe7ea"/>
<rect x="215" y="45.4" width="266" height="3" fill="#4f7468" opacity=".9"/>
<!-- forest -->
<rect x="0" y="50" width="481" height="120" fill="url(#pfor)"/>
<rect x="0" y="47.6" width="481" height="6" fill="#3d6a45" opacity=".55" filter="url(#pb1)"/>
<rect x="0" y="52" width="481" height="110" fill="#000" filter="url(#nzdark)" opacity=".9"/>
<rect x="0" y="56" width="481" height="90" fill="#000" filter="url(#nzlight)" opacity=".6"/>
<rect x="0" y="54" width="481" height="100" fill="#000" filter="url(#nzfine)" opacity=".7"/>
<rect x="0" y="58" width="481" height="90" fill="#000" filter="url(#nzfinel)" opacity=".45"/>
<!-- buildings -->
<g filter="url(#pb1)" opacity=".92">
<rect x="6" y="56" width="11" height="3" fill="#d9dfe0"/><rect x="16" y="58" width="6" height="4" fill="#d88a78"/><rect x="22" y="56" width="5" height="5" fill="#3f8fd0"/><rect x="36" y="56" width="12" height="3.4" fill="#e6e6e2"/><rect x="58" y="52.5" width="8" height="3.4" fill="#e0866a"/><rect x="70" y="56.5" width="9" height="4.4" fill="#e2683c"/><rect x="60" y="56" width="9" height="2.4" fill="#e4dcd6"/>
<rect x="120" y="52.6" width="10" height="4.4" fill="#e2e8ee"/><rect x="92" y="52" width="14" height="2.6" fill="#c9cfcc"/><rect x="164" y="52" width="4" height="4.6" fill="#e0a088"/><rect x="176" y="53" width="9" height="3.6" fill="#ece8e6"/><rect x="189" y="51" width="22" height="5" fill="#ece6e0"/><rect x="193" y="56" width="4" height="5" fill="#e6e2de"/><rect x="205" y="59" width="7" height="2.6" fill="#dfe4ea"/><rect x="216" y="50" width="24" height="3.6" fill="#e8e6e0"/>
<rect x="236" y="51" width="12" height="3" fill="#dfe3e4"/><rect x="262" y="51.5" width="10" height="3" fill="#e6dcc8"/><rect x="288" y="51" width="10" height="3" fill="#58a0d8"/><rect x="296" y="50" width="10" height="3" fill="#efe6cc"/><rect x="314" y="52.5" width="4" height="2" fill="#e6e2dc"/>
<rect x="401" y="52.5" width="12" height="4.4" fill="#f0eeee"/><rect x="424" y="53.6" width="8" height="3.6" fill="#e07a62"/><rect x="430" y="51" width="8" height="3.6" fill="#eeeaf0"/><rect x="418" y="51" width="4" height="2.4" fill="#e6e6ea"/><rect x="452" y="47.6" width="12" height="2.4" fill="#e8d860"/><rect x="440" y="48" width="9" height="2" fill="#dfe4e8"/><rect x="345" y="46.6" width="8" height="1.6" fill="#d8b040"/><rect x="356" y="45" width="3" height="3" fill="#8a8a86"/>
</g>
<g stroke="#6a7076" stroke-width=".7" opacity=".85"><path d="M369.5 35.5 V46.6 M368.6 35.5 H370.6 M368.8 40 H370.4"/><path d="M341.6 41.5 V46.6 M341 41.6 H343.4"/><path d="M309.6 42.8 V46.6"/></g>
<!-- lawn patches -->
<g filter="url(#pb1)">
<path d="M0 93 L22 90 L44 91 L58 97 L56 101 L30 104 L0 103 Z" fill="#8fc043"/><path d="M10 96 L40 94 L52 98 L30 101 Z" fill="#a6c840" opacity=".8"/>
<path d="M76 88 L96 84 L122 84.6 L124 92 L100 95 L84 93 Z" fill="#88bf3f"/>
<path d="M100 98 L124 95 L150 97 L152 108 L134 112 L104 104 Z" fill="#4f9c38"/>
<path d="M32 107 L58 104.6 L52 110 L36 111 Z" fill="#62a83c"/>
<path d="M45 84 L60 82 L74 90 L66 96 L50 92 Z" fill="#5e9638"/>
<rect x="103" y="82.6" width="4.4" height="3.4" fill="#2f62c0"/>
</g>
<!-- dark tree clusters -->
<g filter="url(#pb2)" opacity=".85"><ellipse cx="134" cy="80" rx="16" ry="8" fill="#2c4a34"/><ellipse cx="186" cy="92" rx="16" ry="8" fill="#2b4a33"/><ellipse cx="156" cy="96" rx="10" ry="7" fill="#31503a"/><ellipse cx="228" cy="76" rx="12" ry="7" fill="#2d4c33"/><ellipse cx="20" cy="112" rx="22" ry="10" fill="#2b4c2c"/><ellipse cx="80" cy="120" rx="40" ry="10" fill="#2c4e2c"/><ellipse cx="345" cy="98" rx="30" ry="14" fill="#2a4a30"/><ellipse cx="280" cy="112" rx="40" ry="9" fill="#2e4e30"/><ellipse cx="440" cy="88" rx="30" ry="10" fill="#2f5430"/><ellipse cx="290" cy="82" rx="22" ry="6" fill="#2f5230"/>
<ellipse cx="30" cy="84" rx="24" ry="5" fill="#4f8c38"/><ellipse cx="200" cy="70" rx="30" ry="4" fill="#4c8a38"/><ellipse cx="400" cy="74" rx="40" ry="5" fill="#4a8836"/><ellipse cx="255" cy="95" rx="14" ry="6" fill="#47863a"/><ellipse cx="440" cy="108" rx="24" ry="6" fill="#3f7a34"/></g>
<!-- road + palms -->
<path d="M0 154 L60 149 L130 140 L200 130 L262 122 L270 127 L210 137 L140 148 L70 158 L0 164 Z" fill="#8a6652" filter="url(#pb1)"/>
<path d="M150 136 L262 121 L268 126 L160 143 Z" fill="#b98565" filter="url(#pb1)"/>
<path d="M0 138 L60 132 L130 124 L200 116 L262 112 L270 118 L200 127 L130 137 L60 147 L0 152 Z" fill="#2c4a2c" filter="url(#pb2)" opacity=".8"/>
<g filter="url(#pb1)" fill="#38563a"><ellipse cx="12" cy="146" rx="12" ry="8"/><ellipse cx="26" cy="150" rx="9" ry="6"/><ellipse cx="52" cy="146" rx="9" ry="6"/><ellipse cx="78" cy="141" rx="9" ry="6"/><ellipse cx="102" cy="138" rx="9" ry="6"/><ellipse cx="124" cy="134" rx="8" ry="6"/><ellipse cx="40" cy="138" rx="9" ry="6"/><ellipse cx="64" cy="128" rx="10" ry="7"/><ellipse cx="92" cy="131" rx="8" ry="6"/><ellipse cx="112" cy="126" rx="9" ry="7"/><ellipse cx="136" cy="124" rx="8" ry="6"/><ellipse cx="160" cy="121" rx="9" ry="7"/><ellipse cx="184" cy="118" rx="8" ry="6"/><ellipse cx="206" cy="116" rx="8" ry="6"/><ellipse cx="228" cy="113" rx="8" ry="6"/><ellipse cx="250" cy="106" rx="10" ry="7"/><ellipse cx="272" cy="104" rx="9" ry="7"/></g>
<g stroke="#3a2e28" stroke-width="1" opacity=".75"><path d="M12 146 V160 M40 141 V156 M64 132 V152 M92 134 V149 M112 130 V146 M136 127 V142 M160 124 V139 M184 121 V135 M206 119 V132 M228 116 V128 M250 110 V124"/></g>
<path d="M0 156 L60 151 L130 142 L150 139 L152 144 L130 149 L60 160 L0 166 Z" fill="#4a3c30" opacity=".6" filter="url(#pb1)"/>
<!-- sea -->
<path d="M0 296 L0 262 L60 268 L120 250 L150 225 L140 205 L160 190 L215 170 L235 158 L300 160 L400 150 L481 146 L481 296 Z" fill="url(#psea)"/>
<path d="M150 296 L200 240 L300 215 L400 195 L481 170 L481 296 Z" fill="#fff" filter="url(#nzsea)" opacity=".22"/>
<path d="M150 296 L200 240 L300 215 L400 195 L481 170 L481 296 Z" fill="#fff" filter="url(#nzseaD)" opacity=".22"/>
<path d="M0 296 L0 262 L60 272 L120 254 L150 228 L165 240 L150 270 L130 296 Z" fill="#8f8276" opacity=".75" filter="url(#pb4)"/>
<path d="M232 160 L300 162 L300 184 L235 186 Z" fill="#a99a84" filter="url(#pb2)"/>
<path d="M0 296 L0 262 L60 268 L120 250 L150 225 L140 205 L160 190 L215 170 L300 178 L400 168 L420 150 L481 146 L481 160 L425 172 L395 196 L300 206 L240 214 L200 240 L175 270 L160 296 Z" fill="#9a9184" opacity=".8" filter="url(#pb4)"/>
<!-- foam -->
<g filter="url(#pb2)" fill="none" stroke="#e6eef0" stroke-linecap="round">
<path d="M2 280 C30 290 60 284 90 272 C120 262 150 256 160 238 C166 222 176 206 200 200 C240 192 300 196 340 192 C380 190 400 180 408 160 C420 152 450 152 481 150" stroke-width="6" opacity=".6"/>
<path d="M160 222 C180 208 210 203 250 202 C300 201 330 206 360 198" stroke-width="8" opacity=".55"/>
<path d="M150 262 C175 244 205 230 240 222 C270 214 300 206 340 208 C356 210 368 208 380 202" stroke-width="2.6" opacity=".75"/>
<path d="M120 286 C140 280 160 268 168 252 M60 291 C80 293 110 290 130 282" stroke-width="4" opacity=".5"/>
<path d="M405 160 C420 165 440 162 460 158" stroke-width="4" opacity=".7"/>
</g>
<path d="M0 296 L0 262 L60 268 L120 250 L150 225 L140 205 L160 190 L215 170 L300 176 L400 166 L420 150 L481 146 L481 166 L420 180 L385 205 L300 216 L235 226 L185 262 L150 296 Z" fill="#fff" filter="url(#nzfoam)" opacity=".62"/>
<path d="M205 150 L232 141 L262 128 L292 128 L296 140 L262 150 L236 158 L214 168 L204 160 Z" fill="#6b452c" filter="url(#pb1)"/>
<!-- beach -->
<path d="M231 160 L262 148 L290 135 L296 140 L303 164 L262 164 Z" fill="#d59d6f" filter="url(#pb1)"/>
<path d="M240 158 L284 142 L296 160 Z" fill="#deaa7c" filter="url(#pb1)"/>
<!-- foreground lawn -->
<path d="M0 162 L60 158 L130 151 L207 147 L232 140 L228 146 L207 151 L167 158 L104 183 L57 193 L0 210 Z" fill="url(#plawn)" filter="url(#pb1)"/>
<path d="M0 162 L60 158 L130 151 L207 147 L207 151 L167 158 L104 183 L57 193 L0 210 Z" fill="#fff" filter="url(#nzlight)" opacity=".35"/>
<path d="M20 188 C50 178 90 170 130 160" stroke="#8fb030" stroke-width="9" fill="none" opacity=".4" filter="url(#pb4)"/>
<!-- cliffs -->
<g filter="url(#rough)">
<path d="M0 209 L57 192 L104 182 L167 157 L207 150 L232 143 L236 152 L214 165 L210 176 L174 188 L150 195 L149 203 L139 211 L150 222 L154 232 L139 249 L110 259 L75 268 L52 280 L14 280 L0 271 Z" fill="url(#pcliff)"/>
<path d="M57 192 L104 182 L167 157 L207 150 L232 143 L234 149 L205 160 L170 172 L140 186 L100 197 L60 206 L20 212 L0 216 L0 209 Z" fill="#7c4f30"/>
<path d="M292 131 L330 122 L372 121 L420 122 L452 118 L481 118 L481 150 L460 148 L420 150 L406 160 L393 172 L401 185 L390 186 L364 181 L301 180 L307 169 L298 162 L300 150 L290 140 Z" fill="#523a2a"/>
<path d="M308 173 L330 170 L380 169 L396 170 L393 174 L400 184 L390 185 L364 181 L308 180 L310 175 Z" fill="#40352c"/>
<path d="M235 182 L259 180 L249 192 L235 193 Z M212 176 L232 170 L238 178 L220 184 Z" fill="#3a2e24"/>
</g>
<path d="M0 209 L57 192 L104 182 L167 157 L207 150 L232 143 L236 152 L214 165 L210 176 L174 188 L150 195 L149 203 L139 211 L150 222 L154 232 L139 249 L110 259 L75 268 L52 280 L14 280 L0 271 Z" fill="#fff" filter="url(#nzrock)" opacity=".5"/>
<path d="M0 209 L57 192 L104 182 L167 157 L207 150 L232 143 L236 152 L214 165 L210 176 L174 188 L150 195 L149 203 L139 211 L150 222 L154 232 L139 249 L110 259 L75 268 L52 280 L14 280 L0 271 Z" fill="#fff" filter="url(#nzrockd)" opacity=".6"/>
<path d="M292 131 L330 122 L372 121 L420 122 L452 118 L481 118 L481 150 L420 150 L406 160 L301 166 L298 150 Z" fill="#fff" filter="url(#nzrock)" opacity=".4"/>
<path d="M0 238 C40 236 80 228 110 216 C128 208 140 214 150 228 L139 249 L110 259 L75 268 L52 280 L14 280 L0 271 Z" fill="#33241a" opacity=".55" filter="url(#pb2)"/>
<!-- headland top: road, grass, sand -->
<g filter="url(#pb1)">
<path d="M298 127 L330 117 L372 108 L420 100 L452 96 L453 103 L420 110 L380 118 L345 125 L312 134 Z" fill="#c4c0bc" opacity=".82"/><path d="M330 120 L372 111 L400 107 L398 111 L350 121 Z" fill="#e0dedc" opacity=".7"/><path d="M430 100 L481 94 L481 97 L432 103 Z" fill="#9aa08e" opacity=".7"/>
<path d="M300 124 L340 117 L360 118 L332 124 Z" fill="#bdb5ae"/>
<path d="M330 124 L356 114 L400 109 L436 110 L452 118 L420 124 L372 126 Z" fill="#7a9a34"/>
<path d="M352 122 L380 113 L412 113 L404 121 Z" fill="#a3a63a"/>
<path d="M322 126 L340 122 L352 128 L336 133 Z" fill="#b9ae98"/>
<path d="M452 104 L481 100 L481 118 L462 116 Z" fill="#6d9a3a"/>
<path d="M454 120 L470 118 L481 122 L481 134 L466 132 Z" fill="#cf9670"/>
<path d="M470 97 L481 96 L481 104 L472 105 Z" fill="#b86a4c"/>
<path d="M268 116 L300 110 L330 108 L310 118 L280 124 Z" fill="#2f4e30"/>
<ellipse cx="330" cy="100" rx="22" ry="12" fill="#28452e"/>
</g>
</g>
</svg>

<div id="ptitle">colored-labels-desktop</div>
<div class="iv" style="top:545px;color:#a6a6a6;font-weight:bold;letter-spacing:.25px">PNG image - 734 KB</div>
<div class="il" style="top:576px">Created</div><div class="iv" style="top:576px;letter-spacing:.24px">Today 15:52</div>
<div class="il" style="top:607px">Modified</div><div class="iv" style="top:607px;letter-spacing:.24px">Today 15:52</div>
<div class="il" style="top:638px">Last opened</div><div class="iv" style="top:638px;letter-spacing:.24px">Today 15:52</div>
<div class="il" style="top:669px;letter-spacing:-.35px">Dimensions</div><div class="iv" style="top:669px;word-spacing:-1.6px">888 × 542</div>
<div class="iv" style="top:700px;color:#3b8ef3;letter-spacing:.15px">Add Tags…</div>

</div>
</body>
</html>
